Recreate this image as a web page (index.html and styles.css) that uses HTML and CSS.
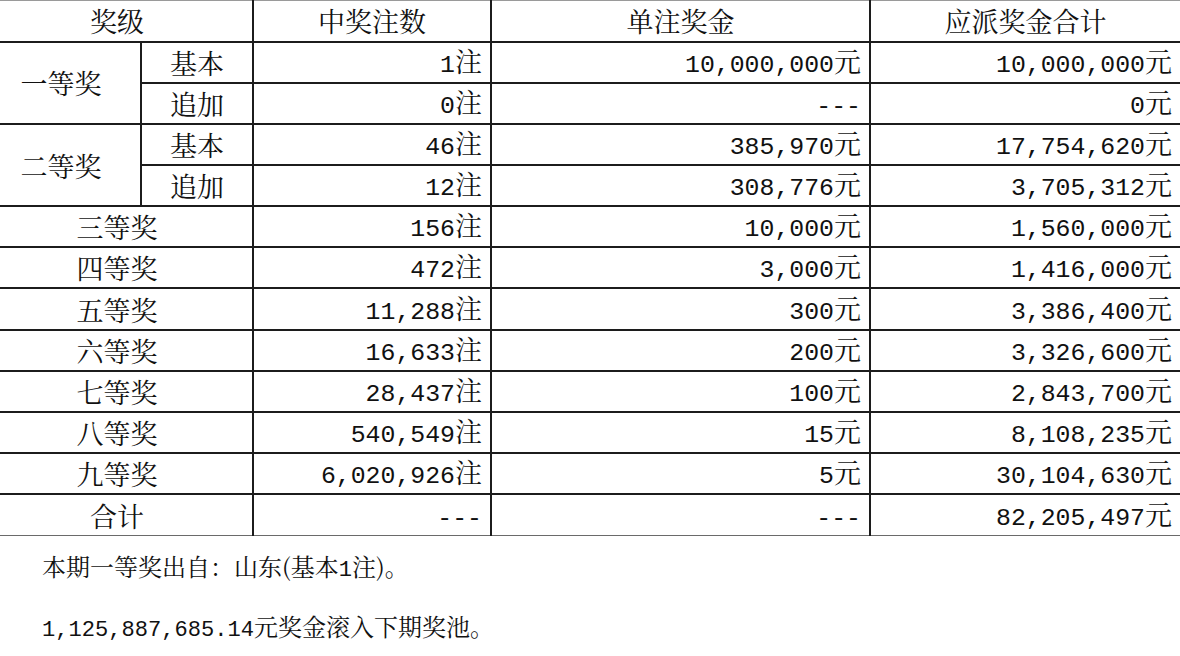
FILE: index.html
```html
<!DOCTYPE html>
<html lang="zh-CN">
<head>
<meta charset="utf-8">
<title>开奖详情</title>
<link rel="stylesheet" href="styles.css">
</head>
<body>
<div class="page">
  <table class="prize">
    <colgroup>
      <col class="c-level">
      <col class="c-sub">
      <col class="c-count">
      <col class="c-each">
      <col class="c-total">
    </colgroup>
    <thead>
      <tr>
        <th colspan="2">奖级</th>
        <th>中奖注数</th>
        <th>单注奖金</th>
        <th>应派奖金合计</th>
      </tr>
    </thead>
    <tbody>
      <tr>
        <td class="lv" rowspan="2">一等奖</td>
        <td class="lv">基本</td>
        <td class="n"><span class="num">1</span>注</td>
        <td class="n"><span class="num">10,000,000</span>元</td>
        <td class="n"><span class="num">10,000,000</span>元</td>
      </tr>
      <tr>
        <td class="lv">追加</td>
        <td class="n"><span class="num">0</span>注</td>
        <td class="n"><span class="num">---</span></td>
        <td class="n"><span class="num">0</span>元</td>
      </tr>
      <tr>
        <td class="lv" rowspan="2">二等奖</td>
        <td class="lv">基本</td>
        <td class="n"><span class="num">46</span>注</td>
        <td class="n"><span class="num">385,970</span>元</td>
        <td class="n"><span class="num">17,754,620</span>元</td>
      </tr>
      <tr>
        <td class="lv">追加</td>
        <td class="n"><span class="num">12</span>注</td>
        <td class="n"><span class="num">308,776</span>元</td>
        <td class="n"><span class="num">3,705,312</span>元</td>
      </tr>
      <tr>
        <td class="lv" colspan="2">三等奖</td>
        <td class="n"><span class="num">156</span>注</td>
        <td class="n"><span class="num">10,000</span>元</td>
        <td class="n"><span class="num">1,560,000</span>元</td>
      </tr>
      <tr>
        <td class="lv" colspan="2">四等奖</td>
        <td class="n"><span class="num">472</span>注</td>
        <td class="n"><span class="num">3,000</span>元</td>
        <td class="n"><span class="num">1,416,000</span>元</td>
      </tr>
      <tr>
        <td class="lv" colspan="2">五等奖</td>
        <td class="n"><span class="num">11,288</span>注</td>
        <td class="n"><span class="num">300</span>元</td>
        <td class="n"><span class="num">3,386,400</span>元</td>
      </tr>
      <tr>
        <td class="lv" colspan="2">六等奖</td>
        <td class="n"><span class="num">16,633</span>注</td>
        <td class="n"><span class="num">200</span>元</td>
        <td class="n"><span class="num">3,326,600</span>元</td>
      </tr>
      <tr>
        <td class="lv" colspan="2">七等奖</td>
        <td class="n"><span class="num">28,437</span>注</td>
        <td class="n"><span class="num">100</span>元</td>
        <td class="n"><span class="num">2,843,700</span>元</td>
      </tr>
      <tr>
        <td class="lv" colspan="2">八等奖</td>
        <td class="n"><span class="num">540,549</span>注</td>
        <td class="n"><span class="num">15</span>元</td>
        <td class="n"><span class="num">8,108,235</span>元</td>
      </tr>
      <tr>
        <td class="lv" colspan="2">九等奖</td>
        <td class="n"><span class="num">6,020,926</span>注</td>
        <td class="n"><span class="num">5</span>元</td>
        <td class="n"><span class="num">30,104,630</span>元</td>
      </tr>
      <tr class="sum">
        <td class="lv" colspan="2">合计</td>
        <td class="n"><span class="num">---</span></td>
        <td class="n"><span class="num">---</span></td>
        <td class="n"><span class="num">82,205,497</span>元</td>
      </tr>
    </tbody>
  </table>
  <div class="notes">
    <p>本期一等奖出自：山东(基本<span class="num">1</span>注)。</p>
    <p><span class="num">1,125,887,685.14</span>元奖金滚入下期奖池。</p>
  </div>
</div>
</body>
</html>
```

FILE: styles.css
```css
html, body {
  margin: 0;
  padding: 0;
  background: #ffffff;
  overflow: hidden;
}

body {
  color: #111111;
  font-family: "Noto Serif CJK SC", "Noto Sans CJK SC", serif;
}

.page {
  width: 1180px;
}

.prize {
  table-layout: fixed;
  border-collapse: collapse;
  width: 1200px;
  margin-left: -20px;
  font-size: 27px;
}

.c-level { width: 160px; }
.c-sub   { width: 112px; }
.c-count { width: 238px; }
.c-each  { width: 379px; }
.c-total { width: 311px; }

.prize th,
.prize td {
  border: 2px solid #1c1c1c;
  height: 41.15px;
  padding: 0 8px 0 0;
  line-height: 1;
  white-space: nowrap;
  font-weight: normal;
  vertical-align: middle;
  box-sizing: border-box;
}

.prize th {
  text-align: center;
  padding: 0;
  border-top: 1px solid #9a9a9a;
}

.prize td.lv {
  text-align: center;
  padding: 0;
}

.prize td.n {
  text-align: right;
}

.prize tr.sum td {
  border-bottom: 1px solid #6a6a6a;
}

.num {
  font-family: "Liberation Mono", monospace;
  font-size: 0.92em;
  line-height: 1;
}

.notes {
  padding-left: 42px;
  font-size: 24px;
}

.notes p {
  margin: 0;
  height: 60px;
  line-height: 60px;
}

.notes .num {
  line-height: 1;
}
```
